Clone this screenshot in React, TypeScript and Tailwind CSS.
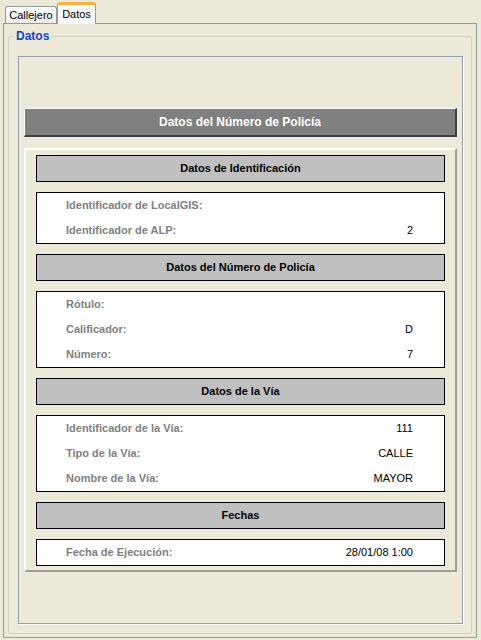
import React from 'react';

interface Row {
  label: string;
  value: string;
}

interface Section {
  title: string;
  rows: Row[];
}

const sections: Section[] = [
  {
    title: 'Datos de Identificación',
    rows: [
      { label: 'Identificador de LocalGIS:', value: '' },
      { label: 'Identificador de ALP:', value: '2' }
    ]
  },
  {
    title: 'Datos del Número de Policía',
    rows: [
      { label: 'Rótulo:', value: '' },
      { label: 'Calificador:', value: 'D' },
      { label: 'Número:', value: '7' }
    ]
  },
  {
    title: 'Datos de la Vía',
    rows: [
      { label: 'Identificador de la Vía:', value: '111' },
      { label: 'Tipo de la Vía:', value: 'CALLE' },
      { label: 'Nombre de la Vía:', value: 'MAYOR' }
    ]
  },
  {
    title: 'Fechas',
    rows: [{ label: 'Fecha de Ejecución:', value: '28/01/08 1:00' }]
  }
];

const SectionBlock: React.FC<{ section: Section }> = ({ section }) => {
  return (
    <>
      <div className="h-[27px] bg-[#c0c0c0] border border-black flex items-center justify-center text-[11px] font-bold text-black">
        {section.title}
      </div>
      <div className="bg-white border border-black">
        {section.rows.map((row) => (
          <div
            key={row.label}
            className="h-[25px] flex items-center justify-between pl-[29px] pr-[31px]"
          >
            <span className="text-[11px] font-bold text-[#808080]">{row.label}</span>
            <span className="text-[11px] text-black">{row.value}</span>
          </div>
        ))}
      </div>
    </>
  );
};

const App: React.FC = () => {
  return (
    <div className="w-[481px] h-[640px] bg-[#ece9d8] overflow-hidden font-['Liberation_Sans',Arial,sans-serif] select-none">
      {/* tab strip */}
      <div className="flex items-end h-[23px] pl-[5px] relative z-10">
        <div className="h-[17px] w-[52px] border border-b-0 border-[#919b9c] rounded-t-[3px] bg-gradient-to-b from-white to-[#ecebe6] text-[11px] text-black flex items-center justify-center">
          Callejero
        </div>
        <div className="h-[22px] w-[39px] border border-b-0 border-[#919b9c] border-t-[3px] border-t-[#f7b33d] rounded-t-[3px] bg-[#fcfcfe] text-[11px] text-black flex items-center justify-center -mb-px">
          Datos
        </div>
      </div>

      {/* tab page */}
      <div className="ml-[3px] w-[474px] h-[615px] border border-[#919b9c] bg-[#ece9d8] pt-[12px] px-[4px] pb-[3px] flex">
        {/* group box */}
        <div className="relative flex-1 border border-[#d0d0bf] rounded-[3px] pt-[19px] pl-[9px] pr-[8px] pb-[9px] flex">
          <span className="absolute -top-[8px] left-[5px] px-[2px] bg-[#ece9d8] text-[12px] font-bold text-[#1046c8] leading-[14px]">
            Datos
          </span>

          {/* inner panel */}
          <div className="flex-1 border border-[#979eab] shadow-[1px_1px_0_#ffffff] pt-[51px] px-[5px] flex flex-col">
            <div className="h-[29px] bg-[#808080] border-t border-l border-white border-b-2 border-r-2 border-b-[#404040] border-r-[#404040] flex items-center justify-center text-[12px] font-bold text-white">
              Datos del Número de Policía
            </div>

            <div className="mt-[11px] border-2 border-t-white border-l-white border-b-[#9d9d9d] border-r-[#9d9d9d] pt-[5px] px-[10px] pb-[4px] flex flex-col gap-[10px]">
              {sections.map((s) => (
                <SectionBlock key={s.title} section={s} />
              ))}
            </div>
          </div>
        </div>
      </div>
    </div>
  );
};

export default App;
